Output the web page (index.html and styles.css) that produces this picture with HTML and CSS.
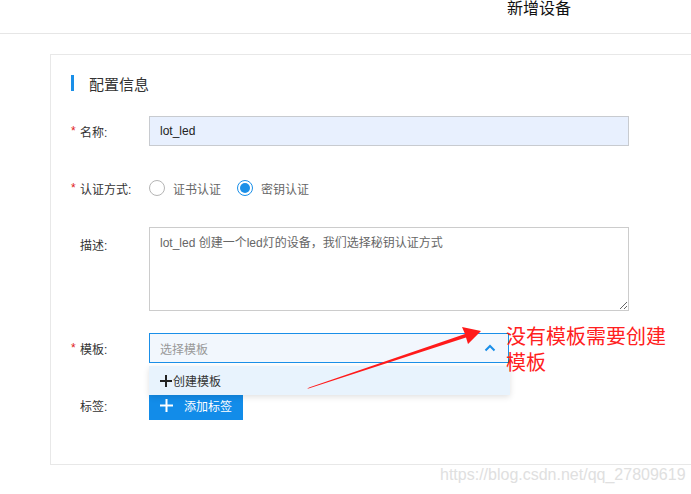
FILE: index.html
```html
<!DOCTYPE html>
<html lang="zh">
<head>
<meta charset="utf-8">
<title>新增设备</title>
<link rel="stylesheet" href="styles.css">
</head>
<body>
<header class="topbar"><span class="page-title">新增设备</span></header>
<main class="main">
  <section class="card">
    <h2 class="section-title"><span class="bar"></span>配置信息</h2>
    <div class="form">
      <div class="row row-name">
        <label class="label"><span class="star">*</span>名称:</label>
        <input class="text-input" type="text" value="lot_led" readonly>
      </div>
      <div class="row row-auth">
        <label class="label"><span class="star">*</span>认证方式:</label>
        <span class="radio"></span><span class="radio-text">证书认证</span>
        <span class="radio checked"></span><span class="radio-text">密钥认证</span>
      </div>
      <div class="row row-desc">
        <label class="label label-top"><span class="star"></span>描述:</label>
        <textarea class="textarea" readonly>lot_led 创建一个led灯的设备，我们选择秘钥认证方式</textarea>
      </div>
      <div class="row row-tpl">
        <label class="label"><span class="star">*</span>模板:</label>
        <div class="select">
          <span class="placeholder">选择模板</span>
          <svg class="chevron" width="12" height="8" viewBox="0 0 12 8"><path d="M1.5 6.5 L6 2 L10.5 6.5" fill="none" stroke="#1a8fe8" stroke-width="2"/></svg>
          <div class="dropdown"><svg class="plus-dark" width="12" height="12" viewBox="0 0 12 12"><path d="M6 0 V12 M0 6 H12" stroke="#222" stroke-width="2"/></svg>创建模板</div>
        </div>
      </div>
      <div class="row row-tag">
        <label class="label"><span class="star"></span>标签:</label>
        <button class="btn-add"><svg class="btn-plus" width="13" height="13" viewBox="0 0 13 13"><path d="M6.5 0 V13 M0 6.5 H13" stroke="#fff" stroke-width="2"/></svg>添加标签</button>
      </div>
    </div>
  </section>
</main>
<svg class="arrow" width="691" height="494" viewBox="0 0 691 494">
  <polygon points="307,389 309,387.5 465,334 462,327 481,331 468,344 466,337.5" fill="#ff1a1a"/>
</svg>
<div class="note">没有模板需要创建模板</div>
<div class="watermark">https://blog.csdn.net/qq_27809619</div>
</body>
</html>
```
FILE: styles.css
```css
* { box-sizing: border-box; }
html, body {
  margin: 0;
  padding: 0;
  width: 691px;
  height: 494px;
  overflow: hidden;
  background: #fff;
  font-family: "Liberation Sans", "Noto Sans CJK SC", sans-serif;
  color: #333;
  position: relative;
}
.topbar {
  height: 34px;
  border-bottom: 1px solid #e6e6e6;
  padding-left: 507px;
}
.page-title {
  display: block;
  font-size: 16px;
  line-height: 18px;
  color: #111;
}
.main {
  padding-top: 20px;
  padding-left: 50px;
}
.card {
  height: 411px;
  border: 1px solid #e8e8e8;
  border-right: none;
  padding: 20px 0 0 20px;
}
.section-title {
  margin: 0;
  display: flex;
  align-items: center;
  height: 16px;
  font-size: 15px;
  font-weight: normal;
  color: #333;
}
.bar {
  width: 3px;
  height: 16px;
  background: #1a8fe8;
  margin-right: 15px;
}
.form {
  padding-left: 0;
  font-size: 12px;
}
.row {
  display: flex;
  align-items: center;
}
.row-name { margin-top: 25px; height: 30px; }
.row-auth { margin-top: 27px; height: 30px; }
.row-desc { margin-top: 24px; align-items: flex-start; }
.row-tpl { margin-top: 22px; height: 30px; }
.row-tag { margin-top: 28px; height: 29px; }
.label {
  width: 78px;
  flex: none;
  display: flex;
  align-items: center;
  color: #333;
}
.label-top { padding-top: 9px; }
.star {
  display: inline-block;
  width: 9px;
  color: #e02020;
}
.text-input {
  width: 480px;
  height: 30px;
  border: 1px solid #c8cbd0;
  background: #e8f0fe;
  padding: 0 10px;
  font-family: inherit;
  font-size: 12px;
  color: #222;
  outline: none;
}
.radio {
  width: 16px;
  height: 16px;
  border-radius: 50%;
  border: 1px solid #b5b5b5;
  background: #fff;
  flex: none;
  position: relative;
}
.radio.checked {
  border-color: #1a8fe8;
}
.radio.checked::after {
  content: "";
  position: absolute;
  left: 2px;
  top: 2px;
  width: 10px;
  height: 10px;
  border-radius: 50%;
  background: #1a8fe8;
}
.radio-text {
  margin-left: 8px;
  margin-right: 16px;
  color: #666;
}
.textarea {
  width: 480px;
  height: 84px;
  border: 1px solid #cccccc;
  padding: 7px 10px;
  font-family: inherit;
  font-size: 12px;
  line-height: 16px;
  color: #666;
  resize: both;
  outline: none;
  margin: 0;
  display: block;
}
.select {
  position: relative;
  width: 360px;
  height: 30px;
  border: 1px solid #1a8fe8;
  background: #f2f7fd;
  display: flex;
  align-items: center;
  padding: 0 10px;
}
.placeholder {
  flex: 1;
  color: #999;
}
.chevron { margin-right: 2px; }
.dropdown {
  position: absolute;
  left: -1px;
  top: 32px;
  width: 361px;
  height: 29px;
  background: #e8f3fd;
  box-shadow: 0 2px 6px rgba(0, 0, 0, 0.12);
  display: flex;
  align-items: center;
  padding-left: 11px;
  color: #333;
  z-index: 2;
}
.plus-dark { margin-right: 1px; }
.btn-add {
  width: 94px;
  height: 29px;
  border: none;
  background: #128ce9;
  color: #fff;
  font-family: inherit;
  font-size: 12px;
  display: flex;
  align-items: center;
  padding: 0 0 0 11px;
  margin: 0;
}
.btn-plus { margin-right: 11px; }
.arrow {
  position: absolute;
  left: 0;
  top: 0;
  pointer-events: none;
  z-index: 3;
}
.note {
  position: absolute;
  left: 506px;
  top: 324px;
  width: 172px;
  font-size: 20px;
  line-height: 26px;
  color: #ff2020;
  z-index: 3;
}
.watermark {
  position: absolute;
  left: 440px;
  top: 466px;
  font-size: 16px;
  line-height: 18px;
  color: #e0e0e0;
  z-index: 3;
}
```
